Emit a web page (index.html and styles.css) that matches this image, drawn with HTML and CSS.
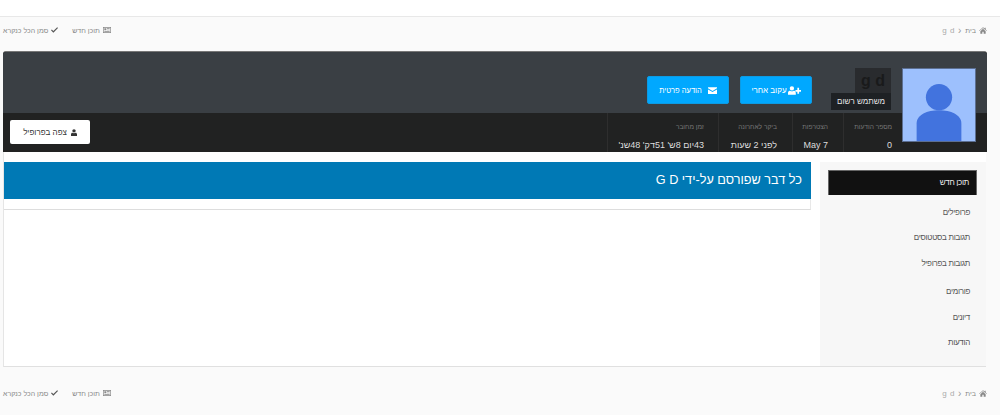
FILE: index.html
```html
<!DOCTYPE html>
<html lang="he" dir="rtl">
<head>
<meta charset="utf-8">
<title>g d</title>
<link rel="stylesheet" href="styles.css">
</head>
<body>
<div class="topbar"></div>
<nav class="crumbs">
  <div class="crumb-group">
    <span class="crumb"><svg class="ico-home" viewBox="0 0 12 10"><path d="M6 0 0 5.200l.6.7L6 1.300l5.400 4.600.6-.7-2-1.700V1H8.600v1.100zM2 6v4h3V7h2v3h3V6L6 2.400z"/></svg>בית</span>
    <span class="sep">‹</span>
    <span class="crumb-user">g d</span>
  </div>
  <div class="crumb-group crumb-links">
    <span class="crumb"><svg class="ico-news" viewBox="0 0 12 9"><path fill-rule="evenodd" d="M0 0h12v9H0zM1 1v7h10V1zM2 2h3v3H2zm4 0h4v1H6zm0 2h4v1H6zM2 6h8v1H2z"/></svg>תוכן חדש</span>
    <span class="crumb"><svg class="ico-check" viewBox="0 0 12 10"><path d="M1.400 4.200 0 5.600 4 9.600 12 1.600 10.600.2 4 6.800z"/></svg>סמן הכל כנקרא</span>
  </div>
</nav>

<section class="card">
  <div class="cover">
    <div class="avatar">
      <svg viewBox="0 0 74 74" class="avatar-svg"><rect width="74" height="74" fill="#9dc0fd"/><circle cx="37" cy="29" r="13.500" fill="#4273de"/><path d="M14 74V56c0-9 11-13.500 23-13.500S60 47 60 56v18z" fill="#4273de"/></svg>
    </div>
    <div class="identity">
      <div class="name">g d</div>
      <div class="role">משתמש רשום</div>
    </div>
    <div class="cover-actions">
      <button class="btn btn-follow"><svg class="ico-follow" viewBox="0 0 15 10"><path d="M4.500 0a2.500 2.500 0 1 1 0 5 2.500 2.500 0 0 1 0-5zM0 10V7.500C0 6 1.500 5.300 2.500 5.300c.6.400 1.200.7 2 .7s1.400-.3 2-.7c1 0 2.500.7 2.500 2.500V10zM10.800 1.800h2v2.500H15v2h-2.200v2.500h-2V6.300H8.600v-2h2.200z"/></svg>עקוב אחרי</button>
      <button class="btn btn-message"><svg class="ico-mail" viewBox="0 0 12 9"><path d="M0 0h12v1.500L6 5 0 1.500zM0 3l6 3.400L12 3v6H0z"/></svg>הודעה פרטית</button>
    </div>
  </div>
  <div class="stats">
    <div class="stat stat-posts"><span class="stat-label">מספר הודעות</span><span class="stat-value">0</span></div>
    <div class="stat stat-joined"><span class="stat-label">הצטרפות</span><span class="stat-value">May 7</span></div>
    <div class="stat stat-visit"><span class="stat-label">ביקר לאחרונה</span><span class="stat-value">לפני 2 שעות</span></div>
    <div class="stat stat-time"><span class="stat-label">זמן מחובר</span><span class="stat-value">43יום 8ש' 51דק' 48שנ'</span></div>
    <button class="btn btn-view"><svg class="ico-user" viewBox="0 0 8 9"><path d="M4 0a2.300 2.300 0 1 1 0 4.600A2.300 2.300 0 0 1 4 0zM0 9V7c0-1.500 1-2.300 1.800-2.300.6.400 1.300.7 2.200.7s1.600-.3 2.200-.7C7 4.700 8 5.500 8 7v2z"/></svg>צפה בפרופיל</button>
  </div>
</section>

<section class="body-panel">
  <aside class="side">
    <ul class="side-list">
      <li class="side-item side-active">תוכן חדש</li>
      <li class="side-item">פרופילים</li>
      <li class="side-item">תגובות בסטטוסים</li>
      <li class="side-item">תגובות בפרופיל</li>
      <li class="side-item side-gap">פורומים</li>
      <li class="side-item">דיונים</li>
      <li class="side-item">הודעות</li>
    </ul>
  </aside>
  <main class="main">
    <h1 class="main-title">כל דבר שפורסם על-ידי G D</h1>
    <div class="main-strip"></div>
  </main>
</section>

<nav class="crumbs crumbs-bottom">
  <div class="crumb-group">
    <span class="crumb"><svg class="ico-home" viewBox="0 0 12 10"><path d="M6 0 0 5.200l.6.7L6 1.300l5.400 4.600.6-.7-2-1.700V1H8.600v1.100zM2 6v4h3V7h2v3h3V6L6 2.400z"/></svg>בית</span>
    <span class="sep">‹</span>
    <span class="crumb-user">g d</span>
  </div>
  <div class="crumb-group crumb-links">
    <span class="crumb"><svg class="ico-news" viewBox="0 0 12 9"><path fill-rule="evenodd" d="M0 0h12v9H0zM1 1v7h10V1zM2 2h3v3H2zm4 0h4v1H6zm0 2h4v1H6zM2 6h8v1H2z"/></svg>תוכן חדש</span>
    <span class="crumb"><svg class="ico-check" viewBox="0 0 12 10"><path d="M1.400 4.200 0 5.600 4 9.600 12 1.600 10.600.2 4 6.800z"/></svg>סמן הכל כנקרא</span>
  </div>
</nav>
</body>
</html>
```
FILE: styles.css
```css
* { box-sizing: border-box; }
html, body { margin: 0; padding: 0; }
body {
  width: 1000px;
  height: 415px;
  overflow: hidden;
  background: #fafafa;
  font-family: "Liberation Sans", sans-serif;
  color: #333;
}
.topbar { height: 17px; background: #fff; border-bottom: 1px solid #e8e8e8; }

.crumbs {
  display: flex;
  justify-content: space-between;
  align-items: center;
  height: 14px;
  margin: 6px 13px 0 3px;
  font-size: 7px;
  color: #888;
}
.crumb-group { display: flex; align-items: center; gap: 4px; }
.crumb-links { gap: 14px; }
.crumb { display: flex; align-items: center; gap: 3px; }
.sep { font-size: 10px; color: #999; margin-left: -1px; }
.crumb-user { color: #aaa; font-size: 8px; letter-spacing: 0.500px; }
.crumbs svg { fill: #888; flex: none; }
.ico-home { width: 8px; height: 7px; }
.ico-news { width: 8px; height: 6px; }
.crumbs .ico-check { width: 7px; height: 6px; fill: #555; }

.card {
  width: 984px;
  margin: 14px 13px 0 3px;
  height: 101px;
  border-radius: 3px 3px 0 0;
  overflow: hidden;
  background: #212222;
  border-top: 1px solid #777;
  display: flex;
  flex-direction: column;
}
.cover {
  height: 61px;
  flex: none;
  background: #3a3f44;
  display: flex;
  align-items: flex-start;
  padding: 16px 11px 0 0;
}
.avatar {
  width: 74px;
  height: 74px;
  flex: none;
  position: relative;
  z-index: 1;
  border: 1px solid #5c6f92;
}
.avatar-svg { display: block; width: 100%; height: 100%; }
.identity {
  width: 60px;
  margin-right: 11px;
  display: flex;
  flex-direction: column;
  align-items: flex-start;
  flex: none;
}
.name {
  width: 36px;
  height: 25px;
  background: #292b2e;
  color: #191a1b;
  font: bold 16px/26px "Liberation Sans", sans-serif;
  text-align: center;
  direction: ltr;
}
.role {
  width: 60px;
  height: 17px;
  background: #1e2124;
  color: #e4e4e4;
  font-size: 8px;
  line-height: 17px;
  text-align: center;
}
.cover-actions { display: flex; gap: 11px; margin: 8px 19px 0 0; }
.btn {
  border: 0;
  font-family: inherit;
  display: flex;
  align-items: center;
  justify-content: center;
  padding: 0;
}
.btn-follow, .btn-message {
  height: 28px;
  background: #00a8ff;
  color: #fff;
  font-size: 7.500px;
  border-radius: 2px;
  border: 1px solid #0d9be3;
}
.btn-follow { width: 72px; gap: 1px; font-size: 8px; }
.btn-message { width: 82px; gap: 6px; }
.ico-follow { width: 13px; height: 9px; fill: #fff; }
.ico-mail { width: 9px; height: 7px; fill: #fff; }

.stats {
  flex: 1;
  display: flex;
  align-items: stretch;
  padding: 0 80px 0 7px;
}
.stat {
  display: flex;
  flex-direction: column;
  align-items: flex-start;
  border-left: 1px solid #2e2e2e;
  padding: 9px 15px 0 0;
  flex: none;
}
.stat-label { font-size: 6.600px; line-height: 10px; color: #777; white-space: nowrap; }
.stat-value { font-size: 9px; line-height: 13px; margin-top: 7px; color: #ddd; white-space: nowrap; }
.stat-posts { width: 64px; }
.stat-joined { width: 51px; }
.stat-visit { width: 74px; }
.stat-time { width: 111px; padding-right: 14px; }
.btn-view {
  margin: 7px auto 8px 0;
  width: 80px;
  background: #fff;
  color: #333;
  font-size: 8px;
  border-radius: 2px;
  gap: 4px;
}
.ico-user { width: 6px; height: 7px; fill: #333; }

.body-panel {
  width: 983px;
  height: 215px;
  margin: 0 14px 0 3px;
  background: #fff;
  border-bottom: 1px solid #e0e0e0;
  border-left: 1px solid #e5e5e5;
  padding-top: 10px;
  display: flex;
  align-items: stretch;
}
.side {
  width: 166px;
  flex: none;
  margin-left: 9px;
  background: #f7f7f7;
  padding: 8px 9px 0 8px;
}
.side-list { list-style: none; margin: 0; padding: 0; }
.side-item {
  height: 25.400px;
  line-height: 25px;
  font-size: 8px;
  letter-spacing: -0.300px;
  color: #555;
  padding-right: 7px;
}
.side-active {
  height: 25px;
  line-height: 24px;
  background: #111;
  color: #eee;
  margin-bottom: 5px;
  border: 1px solid #666;
  border-width: 1px 1px 0 1px;
}
.side-gap { margin-top: 3px; }
.main { flex: 1; min-width: 0; }
.main-title {
  margin: 0;
  height: 37px;
  background: #0079b5;
  color: #fff;
  font-size: 12.700px;
  font-weight: 400;
  line-height: 37px;
  padding-right: 9px;
}
.main-strip { height: 11px; border-bottom: 1px solid #ddd; border-right: 1px solid #e8e8e8; }
.crumbs-bottom { margin-top: 19px; }
```
